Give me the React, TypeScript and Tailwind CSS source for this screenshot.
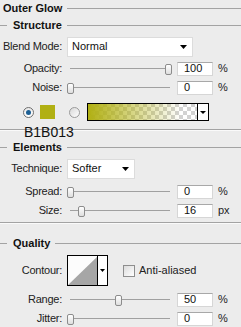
import React from 'react';

const font = { fontFamily: '"Liberation Sans", Arial, sans-serif' };

const Heading: React.FC<{ title: string; dash?: boolean; h: string }> = ({ title, dash, h }) => (
  <div className={`flex items-center ${h}`}>
    {dash ? (
      <>
        <div className="h-px w-[7px] bg-[#a3a3a3]" />
        <span className="ml-[6px] font-bold text-[11px] text-[#111]">{title}</span>
      </>
    ) : (
      <span className="ml-[3px] font-bold text-[11px] text-[#111]">{title}</span>
    )}
    <div className="ml-[5px] h-px flex-1 bg-[#a3a3a3]" />
  </div>
);

const Arrow: React.FC = () => (
  <svg width="7" height="4" viewBox="0 0 7 4">
    <path d="M0 0 H7 L3.5 4 Z" fill="#000" />
  </svg>
);

const Label: React.FC<{ text: string }> = ({ text }) => (
  <div className="w-[62px] text-right text-[11px] tracking-[-0.25px] text-[#222]">{text}</div>
);

const Select: React.FC<{ value: string; w: string }> = ({ value, w }) => (
  <div className={`ml-[5px] flex h-[20px] ${w} items-center justify-between border border-[#dcdcdc] bg-white pl-[4px] pr-[5px]`}>
    <span className="text-[11px] text-[#111]">{value}</span>
    <Arrow />
  </div>
);

const SliderRow: React.FC<{ label: string; pos: number; value: string; unit: string }> = ({ label, pos, value, unit }) => (
  <div className="flex h-[19px] items-center">
    <Label text={label} />
    <div className="relative ml-[5px] flex h-[12px] w-[105px] items-center">
      <div className="ml-[3px] mr-[2px] h-px flex-1 bg-[#a0a0a0]" />
      <div
        className="absolute top-[1px] h-[11px] w-[7px] rounded-[2px] border border-[#8c8c8c] bg-gradient-to-b from-white to-[#dedede]"
        style={{ left: pos }}
      />
    </div>
    <div className="ml-[5px] flex h-[14px] w-[36px] items-center border border-[#d6d6d6] border-t-[#a8a8a8] bg-white pl-[6px] text-[11px] text-[#111]">
      {value}
    </div>
    <span className="ml-[5px] text-[11px] text-[#222]">{unit}</span>
  </div>
);

const GradientBox: React.FC = () => (
  <svg width="122" height="18" viewBox="0 0 122 18" className="ml-[7px]">
    <defs>
      <pattern id="chk" width="8" height="8" patternUnits="userSpaceOnUse">
        <rect width="8" height="8" fill="#ffffff" />
        <rect width="4" height="4" fill="#d2d2d2" />
        <rect x="4" y="4" width="4" height="4" fill="#d2d2d2" />
      </pattern>
      <linearGradient id="glow" x1="0" x2="1" y1="0" y2="0">
        <stop offset="0" stopColor="#b1b013" stopOpacity="1" />
        <stop offset="0.85" stopColor="#b1b013" stopOpacity="0" />
      </linearGradient>
    </defs>
    <rect x="1" y="1" width="110" height="16" fill="url(#chk)" />
    <rect x="1" y="1" width="110" height="16" fill="url(#glow)" />
    <rect x="111" y="1" width="10" height="16" fill="#fff" />
    <path d="M113 8 H119 L116 11 Z" fill="#000" />
    <rect x="0.5" y="0.5" width="121" height="17" fill="none" stroke="#000" />
    <line x1="110.5" y1="0.5" x2="110.5" y2="17.5" stroke="#000" />
  </svg>
);

const ContourBox: React.FC = () => (
  <svg width="41" height="31" viewBox="0 0 41 31" className="ml-[5px]">
    <rect x="1" y="1" width="30" height="29" fill="#fcfcfc" />
    <path d="M1 30 L31 1 V30 Z" fill="#a6a6a6" />
    <rect x="31" y="1" width="9" height="29" fill="#fff" />
    <path d="M33 14 H38 L35.5 17 Z" fill="#000" />
    <rect x="0.5" y="0.5" width="40" height="30" fill="none" stroke="#000" />
    <line x1="30.5" y1="0.5" x2="30.5" y2="30.5" stroke="#000" />
  </svg>
);

const Separator: React.FC<{ h: string; children?: React.ReactNode }> = ({ h, children }) => (
  <div className={`relative ${h}`}>
    <div className="mt-[2px] h-px w-full bg-[#a3a3a3]" />
    <div className="h-px w-full bg-[#fafafa]" />
    {children}
  </div>
);

export default function App() {
  return (
    <div className="h-[327px] w-[241px] overflow-hidden bg-[#ececec]" style={font}>
      <Heading title="Outer Glow" h="h-[17px]" />
      <Heading title="Structure" dash h="h-[17px]" />

      <div className="flex h-[25px] items-center">
        <Label text="Blend Mode:" />
        <Select value="Normal" w="w-[126px]" />
      </div>

      <SliderRow label="Opacity:" pos={98} value="100" unit="%" />
      <SliderRow label="Noise:" pos={0} value="0" unit="%" />

      <div className="flex h-[30px] items-center">
        <div className="ml-[23px] flex h-[11px] w-[11px] items-center justify-center rounded-full border border-[#6f6f6f] bg-gradient-to-b from-[#e8e8e8] to-white">
          <div className="h-[5px] w-[5px] rounded-full bg-[#1d5f94]" />
        </div>
        <div className="ml-[6px] h-[14px] w-[15px] bg-[#b1b013]" />
        <div className="ml-[14px] h-[11px] w-[11px] rounded-full border border-[#9a9a9a] bg-gradient-to-br from-[#d8d8d8] to-white" />
        <GradientBox />
      </div>

      <Separator h="h-[10px]">
        <div className="absolute left-[24px] top-[-4px] text-[14px] leading-[14px] text-[#111]">B1B013</div>
      </Separator>

      <Heading title="Elements" dash h="h-[16px]" />

      <div className="flex h-[27px] items-center">
        <Label text="Technique:" />
        <Select value="Softer" w="w-[68px]" />
      </div>

      <SliderRow label="Spread:" pos={0} value="0" unit="%" />
      <SliderRow label="Size:" pos={11} value="16" unit="px" />

      <Separator h="h-[13px]" />

      <Heading title="Quality" dash h="h-[16px]" />

      <div className="flex h-[39px] items-center">
        <Label text="Contour:" />
        <ContourBox />
        <div className="ml-[15px] h-[12px] w-[12px] border border-[#8e8e8e] bg-gradient-to-br from-[#dcdcdc] to-white" />
        <span className="ml-[4px] text-[11px] text-[#222]">Anti-aliased</span>
      </div>

      <SliderRow label="Range:" pos={48} value="50" unit="%" />
      <SliderRow label="Jitter:" pos={0} value="0" unit="%" />
    </div>
  );
}
